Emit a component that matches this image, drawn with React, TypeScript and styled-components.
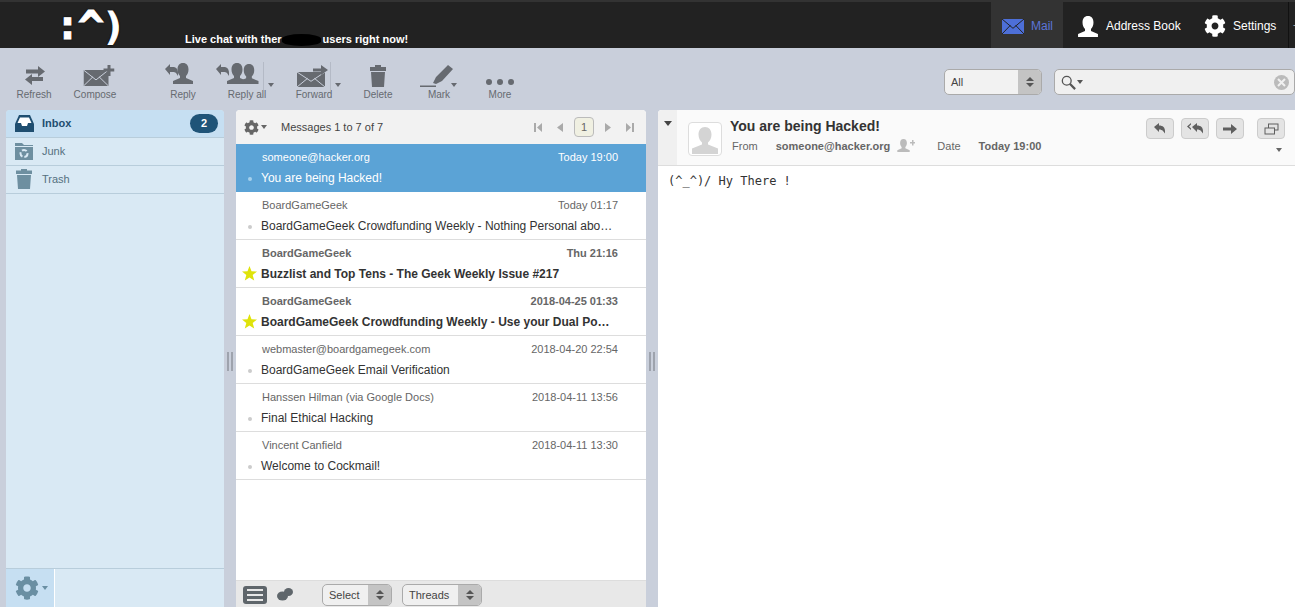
import React from 'react';
import styled, { createGlobalStyle } from 'styled-components';
import { FaCog } from 'react-icons/fa';

const GlobalStyle = createGlobalStyle`
  html, body {
    margin: 0;
    padding: 0;
    height: 100%;
    overflow: hidden;
    background: #c9cfdb;
    font-family: "Liberation Sans", Arial, sans-serif;
  }
  #root { height: 100%; }
`;

const Page = styled.div`
  height: 607px;
  display: flex;
  flex-direction: column;
  overflow: hidden;
`;

/* top bar */
const TopBar = styled.div`
  height: 46px;
  flex: none;
  display: flex;
  background: #222;
  border-top: 2px solid #333;
  color: #fff;
`;

const Logo = styled.div`
  width: 185px;
  flex: none;
  padding-left: 55px;
  box-sizing: border-box;
  display: flex;
  align-items: flex-start;
  font-family: "DejaVu Sans Mono", monospace;
  font-weight: 700;
  line-height: 46px;
  -webkit-text-stroke: 1px #fff;
  text-shadow: 0 0 2px #000, 0 0 2px #000;
`;

const LogoGlyph = styled.span<{ $w: number; $size: number; $top?: number }>`
  width: ${p => p.$w}px;
  margin-top: ${p => p.$top ?? 0}px;
  font-size: ${p => p.$size}px;
  text-align: center;
  display: flex;
  justify-content: center;
`;

const ChatLine = styled.div`
  align-self: flex-end;
  margin-bottom: 2px;
  font-size: 11px;
  font-weight: 700;
  line-height: 13px;
  white-space: nowrap;
`;

const Blot = styled.span`
  display: inline-block;
  width: 39px;
  height: 12px;
  margin: 0 2px 0 0;
  vertical-align: -3px;
  background: #000;
  border-radius: 50% / 40%;
`;

const TopNav = styled.nav`
  margin-left: auto;
  display: flex;
  align-items: stretch;
`;

const NavItem = styled.div<{ $active?: boolean; $w: number; $pad?: number }>`
  width: ${p => p.$w}px;
  box-sizing: border-box;
  padding: 2px 0 0 ${p => p.$pad ?? 11}px;
  display: flex;
  align-items: center;
  gap: 7px;
  font-size: 12px;
  background: ${p => (p.$active ? '#333' : 'transparent')};
  color: ${p => (p.$active ? '#5b74d8' : '#fff')};
`;

const NavEnd = styled.div`
  width: 7px;
  border-left: 1px solid #111;
  margin-left: 1px;
  font-size: 10px;
  line-height: 46px;
  color: #aaa;
  overflow: hidden;
  padding-left: 4px;
  box-sizing: border-box;
`;

/* toolbar */
const Toolbar = styled.div`
  height: 62px;
  flex: none;
  display: flex;
  align-items: flex-start;
  padding-left: 6px;
  color: #666a70;
`;

const ToolButton = styled.div<{ $w: number; $gap?: number }>`
  position: relative;
  width: ${p => p.$w}px;
  margin-left: ${p => p.$gap ?? 0}px;
  height: 53px;
  display: flex;
  flex-direction: column;
  align-items: center;
  justify-content: flex-end;
  font-size: 10px;
  line-height: 12px;
  padding-top: 10px;
  box-sizing: border-box;
`;

const ToolIcon = styled.svg<{ $shift?: number; $below?: number }>`
  display: block;
  fill: #666a70;
  margin-bottom: ${p => p.$below ?? 2}px;
  transform: translateX(${p => p.$shift ?? 0}px);
`;

const DropLine = styled.span<{ $right: number }>`
  position: absolute;
  top: 14px;
  right: ${p => p.$right}px;
  width: 1px;
  height: 28px;
  background: #b4bac6;
`;

const Caret = styled.span<{ $color?: string; $size?: number }>`
  display: inline-block;
  width: 0;
  height: 0;
  border-left: ${p => p.$size ?? 3.5}px solid transparent;
  border-right: ${p => p.$size ?? 3.5}px solid transparent;
  border-top: ${p => ((p.$size ?? 3.5) * 8) / 7}px solid ${p => p.$color ?? '#666a70'};
`;

const ToolCaret = styled(Caret)<{ $right: number }>`
  position: absolute;
  top: 35px;
  right: ${p => p.$right}px;
`;

const ToolbarRight = styled.div`
  margin-left: auto;
  display: flex;
  gap: 12px;
  padding-top: 21px;
`;

const SelectBox = styled.div<{ $w: number; $h: number; $bg?: string }>`
  width: ${p => p.$w}px;
  height: ${p => p.$h}px;
  box-sizing: border-box;
  display: flex;
  border: 1px solid #aaa;
  border-radius: 5px;
  background: ${p => p.$bg ?? '#f2f2f2'};
  color: #444;
  font-size: 11px;
  overflow: hidden;
`;

const SelectLabel = styled.span`
  flex: 1;
  padding-left: 6px;
  display: flex;
  align-items: center;
`;

const SelectArrows = styled.span<{ $w: number }>`
  width: ${p => p.$w}px;
  flex: none;
  background: #c4c4c4;
  display: flex;
  flex-direction: column;
  align-items: center;
  justify-content: center;
  gap: 2px;
`;

const ArrowUp = styled.span`
  width: 0;
  height: 0;
  border-left: 4px solid transparent;
  border-right: 4px solid transparent;
  border-bottom: 4px solid #555;
`;

const ArrowDown = styled.span`
  width: 0;
  height: 0;
  border-left: 4px solid transparent;
  border-right: 4px solid transparent;
  border-top: 4px solid #555;
`;

const SearchBox = styled.div`
  width: 241px;
  height: 26px;
  box-sizing: border-box;
  display: flex;
  align-items: center;
  gap: 1px;
  padding: 0 5px 0 6px;
  border: 1px solid #aaa;
  border-radius: 5px;
  background: #f0f0f0;
`;

const ClearDot = styled.span`
  margin-left: auto;
  width: 15px;
  height: 15px;
  border-radius: 50%;
  background: #bbb;
  display: flex;
  align-items: center;
  justify-content: center;
`;

/* main area */
const Main = styled.div`
  flex: 1;
  min-height: 0;
  display: flex;
  padding-left: 6px;
`;

const Gutter = styled.div`
  width: 12px;
  flex: none;
  display: flex;
  align-items: center;
  justify-content: center;
  padding-top: 6px;
  box-sizing: border-box;
`;

const Grip = styled.span`
  width: 2px;
  height: 19px;
  border-left: 2px solid #9ea3ad;
  border-right: 2px solid #9ea3ad;
  background: #c9cfdb;
`;

const FolderPanel = styled.aside`
  width: 218px;
  flex: none;
  display: flex;
  flex-direction: column;
  background: #d9e9f4;
  border-radius: 4px 4px 0 0;
  overflow: hidden;
`;

const FolderRow = styled.div<{ $active?: boolean }>`
  height: 28px;
  flex: none;
  box-sizing: border-box;
  display: flex;
  align-items: center;
  padding: 0 6px 1px 8px;
  gap: 8px;
  border-bottom: 1px solid #b8cddb;
  background: ${p => (p.$active ? '#c6dff2' : 'transparent')};
  color: ${p => (p.$active ? '#1f4e70' : '#55707f')};
  font-size: 11px;
  font-weight: ${p => (p.$active ? 700 : 400)};
`;

const FolderIconBox = styled.span`
  width: 20px;
  flex: none;
  display: flex;
  justify-content: center;
`;

const Badge = styled.span`
  margin-left: auto;
  width: 28px;
  height: 19px;
  border-radius: 10px;
  background: #1f5478;
  color: #fff;
  font-size: 11px;
  font-weight: 700;
  display: flex;
  align-items: center;
  justify-content: center;
`;

const FolderFooter = styled.div`
  margin-top: auto;
  height: 38px;
  flex: none;
  border-top: 1px solid #b8cddb;
  display: flex;
`;

const FooterGear = styled.div`
  width: 49px;
  box-sizing: border-box;
  background: #c6dff2;
  border-right: 1px solid #fff;
  color: #6a8fa3;
  display: flex;
  align-items: center;
  justify-content: center;
  gap: 3px;
  font-size: 24px;
  padding-left: 2px;
`;

const ListPanel = styled.section`
  width: 410px;
  flex: none;
  display: flex;
  flex-direction: column;
  background: #fff;
  border-radius: 4px 4px 0 0;
  overflow: hidden;
`;

const ListHeader = styled.div`
  height: 34px;
  flex: none;
  box-sizing: border-box;
  display: flex;
  align-items: center;
  padding: 0 12px 0 8px;
  background: #f2f2f2;
  color: #444;
  font-size: 11px;
`;

const HeaderGear = styled.span`
  display: flex;
  align-items: center;
  gap: 2px;
  color: #666;
  font-size: 15px;
  margin-right: 14px;
`;

const Pager = styled.div`
  margin-left: auto;
  display: flex;
  align-items: center;
  gap: 11px;
`;

const PageNumber = styled.span`
  width: 20px;
  height: 20px;
  box-sizing: border-box;
  display: flex;
  align-items: center;
  justify-content: center;
  border: 1px solid #bbb;
  border-radius: 4px;
  background: #f0f0e2;
  color: #666;
  font-size: 11px;
`;

const Messages = styled.div`
  flex: 1;
  min-height: 0;
`;

const MessageRow = styled.div<{ $selected?: boolean; $flagged?: boolean }>`
  height: 48px;
  box-sizing: border-box;
  padding: 6px 28px 0 25px;
  border-bottom: 1px solid ${p => (p.$selected ? '#5ba3d6' : '#ddd')};
  background: ${p => (p.$selected ? '#5ba3d6' : '#fff')};
  color: ${p => (p.$selected ? '#fff' : '#333')};
  font-weight: ${p => (p.$flagged ? 700 : 400)};
`;

const RowTop = styled.div<{ $selected?: boolean }>`
  display: flex;
  justify-content: space-between;
  padding-left: 1px;
  font-size: 11px;
  line-height: 14px;
  color: ${p => (p.$selected ? '#fff' : '#666')};
`;

const RowBottom = styled.div`
  position: relative;
  margin-top: 6px;
  font-size: 12px;
  line-height: 16px;
  white-space: nowrap;
`;

const RowDot = styled.span<{ $selected?: boolean }>`
  position: absolute;
  left: -13px;
  top: 7px;
  width: 4px;
  height: 4px;
  border-radius: 50%;
  background: ${p => (p.$selected ? '#a5d0ec' : '#ccc')};
`;

const RowStar = styled.svg`
  position: absolute;
  left: -19px;
  top: 0;
  fill: #dfe30a;
`;

const ListFooter = styled.div`
  height: 27px;
  flex: none;
  box-sizing: border-box;
  display: flex;
  align-items: center;
  padding: 1px 7px 0;
  border-top: 1px solid #ddd;
  background: #e8e8e8;
`;

const ViewToggle = styled.span`
  width: 24px;
  height: 18px;
  box-sizing: border-box;
  padding: 3px 4px;
  display: flex;
  flex-direction: column;
  justify-content: space-between;
  background: #5f666b;
  border-radius: 3px;
`;

const ToggleBar = styled.i`
  display: block;
  height: 2px;
  background: #e8e8e8;
`;

const ThreadIcon = styled.svg`
  margin-left: 10px;
  margin-right: 29px;
  fill: #5f666b;
`;

const FooterSelects = styled.div`
  display: flex;
  gap: 10px;
`;

const ReadPanel = styled.section`
  flex: 1;
  min-width: 0;
  display: flex;
  flex-direction: column;
  background: #fff;
  border-radius: 4px 0 0 0;
  overflow: hidden;
`;

const ReadHeader = styled.header`
  height: 56px;
  flex: none;
  box-sizing: border-box;
  display: flex;
  background: #fafafa;
  border-bottom: 1px solid #ddd;
`;

const HeaderToggle = styled.div`
  width: 19px;
  flex: none;
  background: #f0f0f0;
  display: flex;
  justify-content: center;
  padding-top: 11px;
  box-sizing: border-box;
`;

const Avatar = styled.div`
  width: 34px;
  height: 34px;
  flex: none;
  margin: 12px 8px 0 11px;
  box-sizing: border-box;
  border: 1px solid #ddd;
  border-radius: 4px;
  background: #fff;
  overflow: hidden;
`;

const HeaderInfo = styled.div`
  flex: 1;
  padding-top: 8px;
`;

const Subject = styled.div`
  font-size: 14px;
  font-weight: 700;
  line-height: 16px;
  color: #333;
`;

const MetaRow = styled.div`
  display: flex;
  align-items: center;
  margin-top: 4px;
  padding-left: 2px;
  font-size: 11px;
  line-height: 16px;
  color: #666;
`;

const MetaValue = styled.span<{ $ml: number }>`
  margin-left: ${p => p.$ml}px;
  font-weight: 700;
`;

const MetaLabel = styled.span<{ $ml?: number }>`
  margin-left: ${p => p.$ml ?? 0}px;
`;

const AddUser = styled.svg`
  margin-left: 7px;
  fill: #bbb;
`;

const HeaderActions = styled.div`
  position: relative;
  width: 149px;
  flex: none;
  padding-top: 8px;
  display: flex;
`;

const ActionButton = styled.span<{ $gap?: number }>`
  width: 28px;
  height: 21px;
  box-sizing: border-box;
  margin-left: ${p => p.$gap ?? 0}px;
  display: flex;
  align-items: center;
  justify-content: center;
  background: #e4e4e4;
  border: 1px solid #ccc;
  border-radius: 4px;
`;

const ActionIcon = styled.svg`
  fill: #5f5f5f;
`;

const MoreCaret = styled(Caret)`
  position: absolute;
  right: 13px;
  top: 38px;
`;

const Body = styled.pre`
  margin: 0;
  padding: 7px 10px;
  font-family: "DejaVu Sans Mono", monospace;
  font-size: 12px;
  line-height: 16px;
  color: #333;
`;

/* drawings */
const person = (x: number, y: number, s = 1) =>
  `M${x} ${y}c${3.6 * s} 0 ${5.5 * s} ${2.6 * s} ${5.5 * s} ${6.5 * s}c0 ${2.8 * s} ${-1 * s} ${5 * s} ${-2.5 * s} ${6.5 * s}v${2 * s}l${7 * s} ${3 * s}v${3 * s}h${-20 * s}v${-3 * s}l${7 * s} ${-3 * s}v${-2 * s}c${-1.5 * s} ${-1.5 * s} ${-2.5 * s} ${-3.7 * s} ${-2.5 * s} ${-6.5 * s}c0 ${-3.9 * s} ${1.9 * s} ${-6.5 * s} ${5.5 * s} ${-6.5 * s}z`;

const Envelope = ({ x = 0, y = 0, w = 26, h = 16, fill = '#666a70', line = '#c9cfdb' }) => (
  <g>
    <path d={`M${x} ${y}h${w}v${h}h${-w}z`} fill={fill} />
    <path d={`M${x} ${y}L${x + w / 2} ${y + h * 0.62}L${x + w} ${y}M${x} ${y + h}L${x + w * 0.38} ${y + h * 0.42}M${x + w} ${y + h}L${x + w * 0.62} ${y + h * 0.42}`} stroke={line} strokeWidth="1" fill="none" />
  </g>
);

const ReplyArrow = ({ x, y }: { x: number; y: number }) => (
  <path d={`M${x} ${y + 4}l5 -5v3h3c3 0 5 2 5 6v3l-2 -3c-1 -1 -2 -1 -3 -1h-3v3z`} />
);

const RefreshIcon = () => (
  <ToolIcon width="23" height="20" viewBox="0 0 23 20" $below={3}>
    <path d="M3 3.500h12V0l7 5.500-7 5.500V7.500H3zM20 11H9V8L2 13.500l7 5.500v-4h11z" />
  </ToolIcon>
);

const ComposeIcon = () => (
  <ToolIcon width="31" height="22" viewBox="0 0 31 22" $shift={3.5}>
    <Envelope x={0} y={5} w={25} h={16} />
    <path d="M20 3.500h4V0h3v3.500h4v3h-4V11h-3V6.500h-4z" />
  </ToolIcon>
);

const ReplyIcon = () => (
  <ToolIcon width="30" height="24" viewBox="0 0 30 24" $shift={-3}>
    <ReplyArrow x={0} y={2} />
    <path d={person(18, 0)} />
  </ToolIcon>
);

const ReplyAllIcon = () => (
  <ToolIcon width="44" height="24" viewBox="0 0 44 24" $shift={-9}>
    <ReplyArrow x={0} y={2} />
    <path d={person(21, 0)} />
    <path d={person(33, 1, 0.95)} />
  </ToolIcon>
);

const ForwardIcon = () => (
  <ToolIcon width="32" height="22" viewBox="0 0 32 22" $shift={-1}>
    <Envelope x={0} y={7} w={28} h={15} />
    <path d="M16 3.500h8V0l7 5-7 5V6.500h-8z" />
  </ToolIcon>
);

const DeleteIcon = () => (
  <ToolIcon width="18" height="22" viewBox="0 0 18 22">
    <path d="M6 0h6v2h5v4H1V2h5zM2 7h14l-1 15H3z" />
  </ToolIcon>
);

const MarkIcon = () => (
  <ToolIcon width="38" height="22" viewBox="0 0 38 22">
    <path d="M0 20.500h16V22H0zM13 18l3-6L28 0l5 4-11 12-6 3z" />
  </ToolIcon>
);

const MoreIcon = () => (
  <ToolIcon width="30" height="22" viewBox="0 0 30 22" $below={0}>
    <circle cx="4" cy="15" r="3" />
    <circle cx="15" cy="15" r="3" />
    <circle cx="26" cy="15" r="3" />
  </ToolIcon>
);

const folders = [
  {
    name: 'Inbox',
    active: true,
    icon: (
      <svg width="19" height="17" viewBox="0 0 19 17">
        <path d="M4 0h11l4 9v8H0V9z" fill="#1f4e70" />
        <path d="M5 2.500h9L16.500 8H13l-1 3H7L6 8H2.500z" fill="#fff" />
      </svg>
    ),
  },
  {
    name: 'Junk',
    icon: (
      <svg width="20" height="17" viewBox="0 0 20 17" fill="#6e8fa0">
        <path d="M1 0h7l2 2h9v1H1zM1 4h18v13H1z" />
        <circle cx="10" cy="10.500" r="3.500" fill="none" stroke="#d9e9f4" strokeWidth="2" strokeDasharray="5 2" />
      </svg>
    ),
  },
  {
    name: 'Trash',
    icon: (
      <svg width="16" height="20" viewBox="0 0 16 20" fill="#6e8fa0">
        <path d="M5 0h6v1.500h5V5H0V1.500h5zM1 6h14l-1 14H2z" />
      </svg>
    ),
  },
];

const rows = [
  { from: 'someone@hacker.org', date: 'Today 19:00', subject: 'You are being Hacked!', selected: true },
  { from: 'BoardGameGeek', date: 'Today 01:17', subject: 'BoardGameGeek Crowdfunding Weekly - Nothing Personal abo…' },
  { from: 'BoardGameGeek', date: 'Thu 21:16', subject: 'Buzzlist and Top Tens - The Geek Weekly Issue #217', flagged: true },
  { from: 'BoardGameGeek', date: '2018-04-25 01:33', subject: 'BoardGameGeek Crowdfunding Weekly - Use your Dual Po…', flagged: true },
  { from: 'webmaster@boardgamegeek.com', date: '2018-04-20 22:54', subject: 'BoardGameGeek Email Verification' },
  { from: 'Hanssen Hilman (via Google Docs)', date: '2018-04-11 13:56', subject: 'Final Ethical Hacking' },
  { from: 'Vincent Canfield', date: '2018-04-11 13:30', subject: 'Welcome to Cockmail!' },
];

const App: React.FC = () => (
  <Page>
    <GlobalStyle />
    <TopBar>
      <Logo>
        <LogoGlyph $w={25} $size={40}>:</LogoGlyph>
        <LogoGlyph $w={22} $size={44} $top={2}>^</LogoGlyph>
        <LogoGlyph $w={24} $size={38} $top={1}>)</LogoGlyph>
      </Logo>
      <ChatLine>
        Live chat with ther<Blot />users right now!
      </ChatLine>
      <TopNav>
        <NavItem $active $w={72}>
          <svg width="22" height="15" viewBox="0 0 22 15">
            <Envelope w={22} h={15} fill="#4d6fd8" line="#222" />
          </svg>
          Mail
        </NavItem>
        <NavItem $w={130} $pad={14}>
          <svg width="22" height="21" viewBox="0 0 21 20" fill="#fff">
            <path d={person(10.500, 0, 0.95)} />
          </svg>
          Address Book
        </NavItem>
        <NavItem $w={94}>
          <FaCog size={22} />
          Settings
        </NavItem>
        <NavEnd>-</NavEnd>
      </TopNav>
    </TopBar>

    <Toolbar>
      <ToolButton $w={56}><RefreshIcon />Refresh</ToolButton>
      <ToolButton $w={66}><ComposeIcon />Compose</ToolButton>
      <ToolButton $w={56} $gap={27}><ReplyIcon />Reply</ToolButton>
      <ToolButton $w={72}>
        <ReplyAllIcon />Reply all
        <DropLine $right={19} />
        <ToolCaret $right={9} />
      </ToolButton>
      <ToolButton $w={62}>
        <ForwardIcon />Forward
        <DropLine $right={14} />
        <ToolCaret $right={4} />
      </ToolButton>
      <ToolButton $w={56} $gap={5}><DeleteIcon />Delete</ToolButton>
      <ToolButton $w={56} $gap={5}>
        <MarkIcon />Mark
        <ToolCaret $right={10} />
      </ToolButton>
      <ToolButton $w={56} $gap={5}><MoreIcon />More</ToolButton>
      <ToolbarRight>
        <SelectBox $w={98} $h={26}>
          <SelectLabel>All</SelectLabel>
          <SelectArrows $w={23}><ArrowUp /><ArrowDown /></SelectArrows>
        </SelectBox>
        <SearchBox>
          <svg width="15" height="15" viewBox="0 0 17 17" fill="none" stroke="#555" strokeWidth="1.500">
            <circle cx="6.500" cy="6.500" r="5" />
            <path d="M10 10l6 6" strokeWidth="2.500" />
          </svg>
          <Caret $color="#555" />
          <ClearDot>
            <svg width="9" height="9" viewBox="0 0 9 9" stroke="#f0f0f0" strokeWidth="2">
              <path d="M1 1l7 7M8 1l-7 7" />
            </svg>
          </ClearDot>
        </SearchBox>
      </ToolbarRight>
    </Toolbar>

    <Main>
      <FolderPanel>
        {folders.map(f => (
          <FolderRow key={f.name} $active={f.active}>
            <FolderIconBox>{f.icon}</FolderIconBox>
            {f.name}
            {f.active && <Badge>2</Badge>}
          </FolderRow>
        ))}
        <FolderFooter>
          <FooterGear>
            <FaCog />
            <Caret $color="#6a8fa3" />
          </FooterGear>
        </FolderFooter>
      </FolderPanel>

      <Gutter><Grip /></Gutter>

      <ListPanel>
        <ListHeader>
          <HeaderGear>
            <FaCog />
            <Caret $color="#666" />
          </HeaderGear>
          Messages 1 to 7 of 7
          <Pager>
            <svg width="12" height="9" viewBox="0 0 12 9" fill="#aaa"><path d="M0 0h2v9H0zM8 0v9L3 4.500z" /></svg>
            <svg width="6" height="9" viewBox="0 0 6 9" fill="#aaa"><path d="M6 0v9L0 4.500z" /></svg>
            <PageNumber>1</PageNumber>
            <svg width="6" height="9" viewBox="0 0 6 9" fill="#aaa"><path d="M0 0v9l6-4.500z" /></svg>
            <svg width="12" height="9" viewBox="-4 0 12 9" fill="#aaa"><path d="M6 0h2v9H6zM0 0v9l5-4.500z" /></svg>
          </Pager>
        </ListHeader>
        <Messages>
          {rows.map(r => (
            <MessageRow key={r.subject} $selected={r.selected} $flagged={r.flagged}>
              <RowTop $selected={r.selected}>
                <span>{r.from}</span>
                <span>{r.date}</span>
              </RowTop>
              <RowBottom>
                {r.flagged ? (
                  <RowStar width="15" height="15" viewBox="0 0 15 15">
                    <path d="M7.500 0l2 5.300 5.500.2-4.300 3.500 1.500 5.500-4.700-3.100-4.700 3.100 1.500-5.500L0 5.500l5.500-.2z" />
                  </RowStar>
                ) : (
                  <RowDot $selected={r.selected} />
                )}
                {r.subject}
              </RowBottom>
            </MessageRow>
          ))}
        </Messages>
        <ListFooter>
          <ViewToggle><ToggleBar /><ToggleBar /><ToggleBar /></ViewToggle>
          <ThreadIcon width="16" height="13" viewBox="0 0 16 13">
            <ellipse cx="5.500" cy="8" rx="5.500" ry="4.500" />
            <ellipse cx="11.500" cy="4" rx="4.500" ry="4" />
          </ThreadIcon>
          <FooterSelects>
            <SelectBox $w={70} $h={22} $bg="#f0f0f0">
              <SelectLabel>Select</SelectLabel>
              <SelectArrows $w={23}><ArrowUp /><ArrowDown /></SelectArrows>
            </SelectBox>
            <SelectBox $w={80} $h={22} $bg="#f0f0f0">
              <SelectLabel>Threads</SelectLabel>
              <SelectArrows $w={23}><ArrowUp /><ArrowDown /></SelectArrows>
            </SelectBox>
          </FooterSelects>
        </ListFooter>
      </ListPanel>

      <Gutter><Grip /></Gutter>

      <ReadPanel>
        <ReadHeader>
          <HeaderToggle><Caret $color="#444" $size={4.500} /></HeaderToggle>
          <Avatar>
            <svg width="32" height="32" viewBox="0 0 32 32" fill="#d4d4d4">
              <path d="M16 4c4 0 6.500 3 6.500 7.500 0 3.500-1.500 6.500-3.500 8v2l10 4V31H3v-5.500l10-4v-2c-2-1.500-3.500-4.500-3.500-8C9.500 7 12 4 16 4z" />
            </svg>
          </Avatar>
          <HeaderInfo>
            <Subject>You are being Hacked!</Subject>
            <MetaRow>
              <MetaLabel>From</MetaLabel>
              <MetaValue $ml={18}>someone@hacker.org</MetaValue>
              <AddUser width="18" height="14" viewBox="0 0 18 14">
                <path d={person(6.500, 0, 0.62)} />
                <path d="M13 3h2V1h1.500v2H18v1.500h-1.500v2H15v-2h-2z" />
              </AddUser>
              <MetaLabel $ml={22}>Date</MetaLabel>
              <MetaValue $ml={18}>Today 19:00</MetaValue>
            </MetaRow>
          </HeaderInfo>
          <HeaderActions>
            <ActionButton>
              <ActionIcon width="12" height="11" viewBox="0 0 12 11"><path d="M0 4l5-4v2.500c4 0 6 2 6 6v2L9 8C8 7 7 6.500 5 6.500V9z" /></ActionIcon>
            </ActionButton>
            <ActionButton $gap={7}>
              <ActionIcon width="17" height="11" viewBox="0 0 17 11"><path d="M5 4l5-4v2.500c4 0 6 2 6 6v2L14 8c-1-1-2-1.500-4-1.500V9zM4 0L0 3.500 4 7V5.500L2 3.500 4 1.500z" /></ActionIcon>
            </ActionButton>
            <ActionButton $gap={7}>
              <ActionIcon width="14" height="10" viewBox="0 0 14 10"><path d="M0 3.500h8V0l6 5-6 5V6.500H0z" /></ActionIcon>
            </ActionButton>
            <ActionButton $gap={13}>
              <ActionIcon width="15" height="12" viewBox="0 0 15 12">
                <path d="M4 .5h10.500v7H11v4H.5v-7H4zM5 1.500v3h6v2h2.500v-5zM1.500 5.500v5H10v-5z" fillRule="evenodd" />
              </ActionIcon>
            </ActionButton>
            <MoreCaret $color="#666" />
          </HeaderActions>
        </ReadHeader>
        <Body>(^_^)/ Hy There !</Body>
      </ReadPanel>
    </Main>
  </Page>
);

export default App;
